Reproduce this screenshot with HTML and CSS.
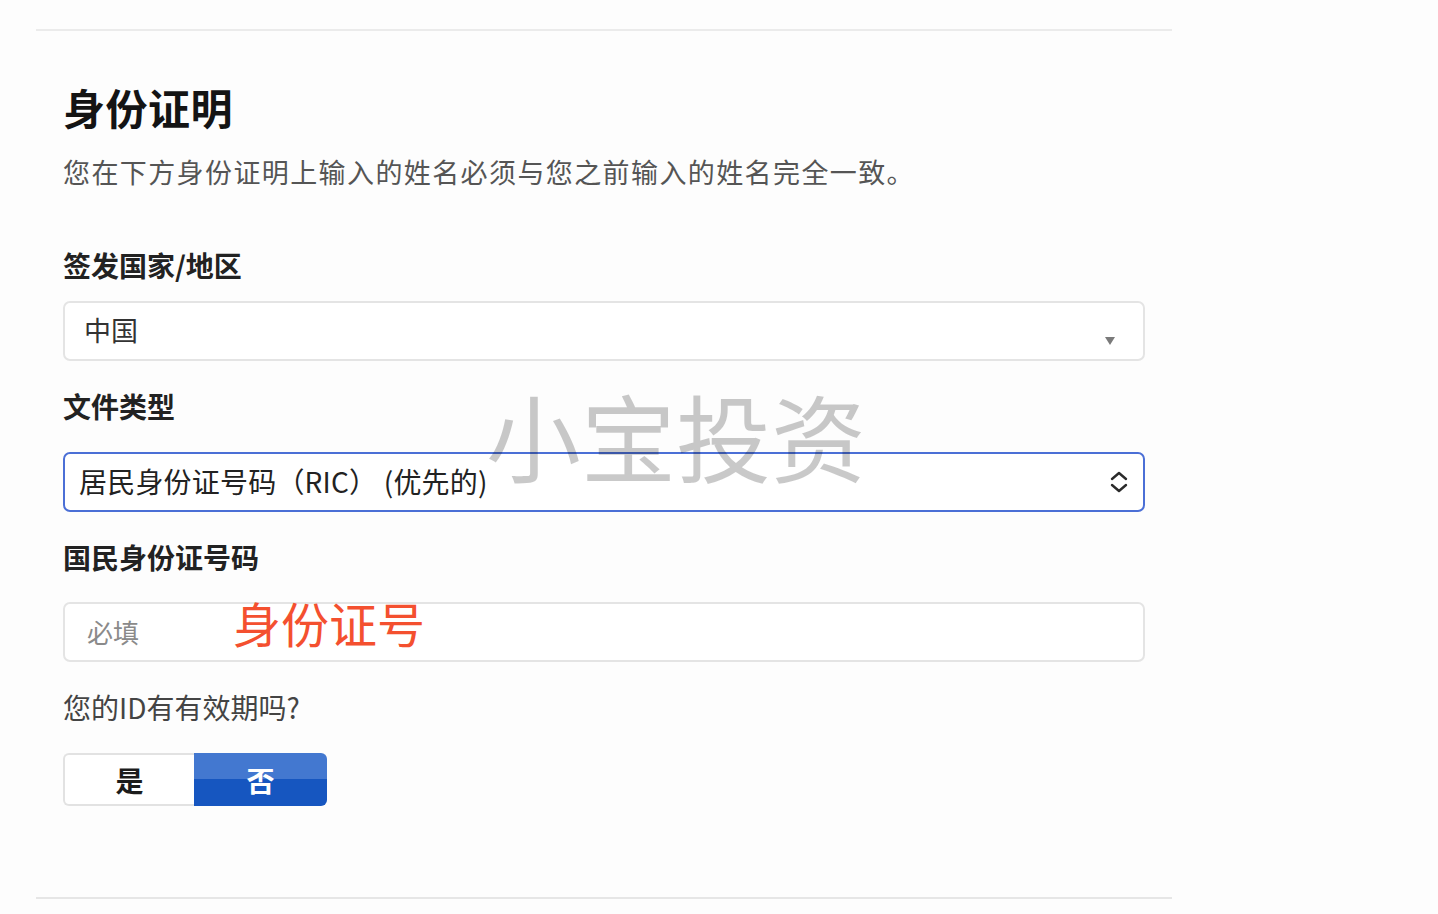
FILE: index.html
```html
<!DOCTYPE html>
<html lang="zh-CN">
<head>
<meta charset="utf-8">
<title>身份证明</title>
<link rel="stylesheet" href="styles.css">
</head>
<body>
<div class="page">
  <div class="section">
    <h1 class="title">身份证明</h1>
    <p class="subtitle">您在下方身份证明上输入的姓名必须与您之前输入的姓名完全一致。</p>

    <div class="label label-first">签发国家/地区</div>
    <div class="field field-first">
      <span class="value value-country">中国</span>
      <span class="caret"></span>
    </div>

    <div class="label">文件类型</div>
    <div class="field field-focus">
      <span class="value value-doc">居民身份证号码（RIC） (优先的)</span>
      <svg class="updown" width="20" height="22" viewBox="0 0 20 22" aria-hidden="true">
        <path d="M3 8 L10 2 L17 8" fill="none" stroke="#2b2b2b" stroke-width="2.4" stroke-linecap="round" stroke-linejoin="round"/>
        <path d="M3 14 L10 20 L17 14" fill="none" stroke="#2b2b2b" stroke-width="2.4" stroke-linecap="round" stroke-linejoin="round"/>
      </svg>
    </div>

    <div class="label">国民身份证号码</div>
    <div class="field field-input">
      <span class="placeholder">必填</span>
    </div>

    <div class="question">您的ID有有效期吗?</div>
    <div class="toggle">
      <div class="seg seg-yes">是</div>
      <div class="seg seg-no">否</div>
    </div>
  </div>

  <div class="watermark">小宝投资</div>
  <div class="note">身份证号</div>
</div>
</body>
</html>
```

FILE: styles.css
```css
html, body {
  margin: 0;
  padding: 0;
  background: #fdfdfd;
}

body {
  font-family: "Noto Sans CJK SC", "Noto Sans", sans-serif;
  color: #222;
}

.page {
  position: relative;
  width: 1438px;
  height: 914px;
  overflow: hidden;
  padding-top: 29px;
  box-sizing: border-box;
}

.section {
  margin-left: 36px;
  width: 1136px;
  height: 870px;
  box-sizing: border-box;
  border-top: 2px solid #ebebeb;
  border-bottom: 2px solid #e6e6e6;
  padding: 0 27px 0 27px;
  display: flex;
  flex-direction: column;
}

.title {
  margin: 51px 0 0 0;
  font-size: 42px;
  line-height: 50px;
  font-weight: 700;
  color: #141414;
  letter-spacing: 0.5px;
}

.subtitle {
  margin: 22px 0 0 0;
  font-size: 27px;
  line-height: 36px;
  color: #555;
  letter-spacing: 1.4px;
}

.label {
  margin-top: 27px;
  font-size: 28px;
  line-height: 36px;
  font-weight: 700;
  color: #222;
}

.label-first {
  margin-top: 57px;
}

.field {
  margin-top: 28px;
  height: 60px;
  box-sizing: border-box;
  border: 2px solid #e4e4e4;
  border-radius: 7px;
  background: #fff;
  display: flex;
  align-items: center;
  padding: 0 14px 0 19px;
}

.field-first {
  margin-top: 18px;
  padding-bottom: 4px;
}

.field-focus {
  border: 2px solid #4b6fd6;
  padding-left: 14px;
  padding-bottom: 2px;
}

.field-input {
  margin-top: 27px;
  padding-left: 22px;
  padding-bottom: 2px;
}

.value {
  flex: 1;
  font-size: 27px;
  color: #333;
}

.value-doc {
  font-size: 28px;
  color: #222;
  letter-spacing: 0.2px;
}

.caret {
  width: 0;
  height: 0;
  border-left: 5px solid transparent;
  border-right: 5px solid transparent;
  border-top: 8px solid #7a7a7a;
  margin: 24px 14px 0 0;
}

.updown {
  margin-right: 0;
  margin-top: 2px;
}

.placeholder {
  font-size: 26px;
  color: #8a8a8a;
}

.question {
  margin-top: 27px;
  font-size: 28px;
  line-height: 36px;
  color: #444;
}

.toggle {
  margin-top: 28px;
  display: flex;
  width: 264px;
  height: 53px;
}

.seg {
  flex: 0 0 auto;
  display: flex;
  align-items: center;
  justify-content: center;
  font-size: 28px;
  font-weight: 700;
  box-sizing: border-box;
}

.seg-yes {
  width: 131px;
  border: 2px solid #e2e2e2;
  border-right: none;
  border-radius: 6px 0 0 6px;
  background: #fff;
  color: #1c1c1c;
}

.seg-no {
  width: 133px;
  border-radius: 0 6px 6px 0;
  background: linear-gradient(to bottom, #4378d0 0%, #4378d0 50%, #1656c0 50%, #1656c0 100%);
  color: #fff;
}

.watermark {
  position: absolute;
  left: 486px;
  top: 375px;
  font-size: 95px;
  line-height: 120px;
  color: rgba(0, 0, 0, 0.21);
  white-space: nowrap;
  pointer-events: none;
}

.note {
  position: absolute;
  left: 233px;
  top: 592px;
  font-size: 48px;
  line-height: 60px;
  color: #f4502f;
  white-space: nowrap;
  pointer-events: none;
}
```
